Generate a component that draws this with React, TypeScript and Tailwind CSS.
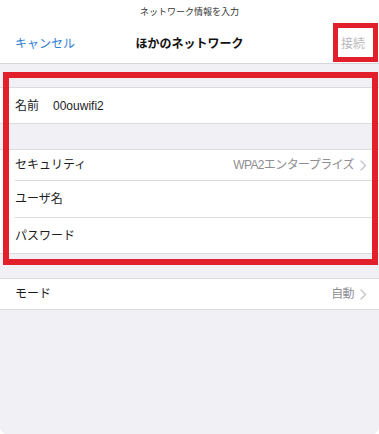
import React from 'react'

const font = "font-['Liberation_Sans','Noto_Sans_CJK_JP',sans-serif]"

function Chevron() {
  return (
    <svg width="7" height="11" viewBox="0 0 7 11" className="ml-[6px] shrink-0">
      <polyline points="1,1 5.5,5.5 1,10" fill="none" stroke="#c4c4c9" strokeWidth="1.4" strokeLinecap="round" strokeLinejoin="round" />
    </svg>
  )
}

interface RowProps {
  label: string
  value?: string
  detail?: string
  height: string
  last?: boolean
}

function Row({ label, value, detail, height, last }: RowProps) {
  return (
    <div className={`bg-white pl-[15px] ${height}`}>
      <div className={`flex items-center h-full pr-[12px] ${last ? '' : 'border-b border-[#dcdce0]'}`}>
        <span className="text-[12px] text-[#1c1c1e]">{label}</span>
        {value && <span className="ml-[14px] text-[12px] text-[#1c1c1e]">{value}</span>}
        {detail && (
          <div className="ml-auto flex items-center">
            <span className="text-[12px] text-[#8e8e93] tracking-[-0.6px]">{detail}</span>
            <Chevron />
          </div>
        )}
      </div>
    </div>
  )
}

export default function App() {
  return (
    <div className={`w-[379px] h-[434px] bg-[#f0f0f5] rounded-b-[7px] overflow-hidden flex flex-col ${font}`}>
      <div className="bg-white h-[64px] border-b border-[#d6d6da] shrink-0 flex flex-col">
        <div className="h-[25px] pt-[1px] flex items-center justify-center text-[9px] text-[#333]">
          ネットワーク情報を入力
        </div>
        <div className="flex-1 flex items-center px-[15px] relative">
          <span className="text-[12px] text-[#2f7ed6]">キャンセル</span>
          <span className="absolute left-1/2 -translate-x-1/2 text-[12px] font-bold text-[#111]">ほかのネットワーク</span>
          <span className="ml-auto mr-[-1px] text-[12px] text-[#b9b9bd]">接続</span>
          <div className="absolute right-[1px] top-[-2px] w-[45px] h-[39px] border-[5px] border-[#e1202c] pointer-events-none" />
        </div>
      </div>

      <div className="relative">
        <div className="h-[23px]" />
        <div className="border-t border-b border-[#dcdce0]">
          <Row label="名前" value="00ouwifi2" height="h-[35px]" last />
        </div>
        <div className="h-[25px]" />
        <div className="border-t border-b border-[#dcdce0]">
          <Row label="セキュリティ" detail="WPA2エンタープライズ" height="h-[31px]" />
          <Row label="ユーザ名" height="h-[37px]" />
          <Row label="パスワード" height="h-[35px]" last />
        </div>
        <div className="absolute left-[3px] right-[1px] top-[8px] h-[193px] border-[6px] border-[#e1202c] pointer-events-none" />
      </div>

      <div className="h-[24px] shrink-0" />
      <div className="border-t border-b border-[#dcdce0]">
        <Row label="モード" detail="自動" height="h-[30px]" last />
      </div>
    </div>
  )
}
